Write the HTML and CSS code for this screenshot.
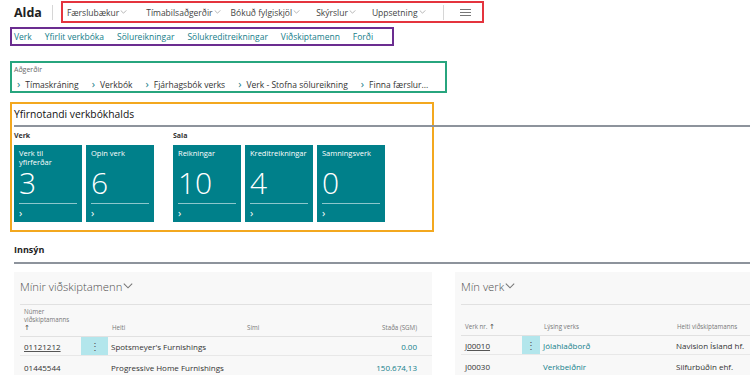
FILE: index.html
```html
<!DOCTYPE html>
<html lang="is">
<head>
    <meta charset="UTF-8">
    <meta name="viewport" content="width=device-width, initial-scale=1.0">
    <title>Alda - Yfirnotandi verkbókhalds</title>
    <link rel="stylesheet" href="styles.css">
</head>
<body>
    <header class="topbar">
        <span class="company">Alda</span>
        <span class="vsep"></span>
        <nav class="menu mark-red">
            <span class="menu-item">Færslubækur<svg class="chev" viewBox="0 0 8 5"><path d="M0.5 0.5 L4 4 L7.5 0.5"/></svg></span>
            <span class="menu-item">Tímabilsaðgerðir<svg class="chev" viewBox="0 0 8 5"><path d="M0.5 0.5 L4 4 L7.5 0.5"/></svg></span>
            <span class="menu-item">Bókuð fylgiskjöl<svg class="chev" viewBox="0 0 8 5"><path d="M0.5 0.5 L4 4 L7.5 0.5"/></svg></span>
            <span class="menu-item">Skýrslur<svg class="chev" viewBox="0 0 8 5"><path d="M0.5 0.5 L4 4 L7.5 0.5"/></svg></span>
            <span class="menu-item">Uppsetning<svg class="chev" viewBox="0 0 8 5"><path d="M0.5 0.5 L4 4 L7.5 0.5"/></svg></span>
            <span class="vsep"></span>
            <svg class="hamburger" viewBox="0 0 11 7"><path d="M0 0.5 H11 M0 3.5 H11 M0 6.5 H11"/></svg>
        </nav>
    </header>

    <nav class="links mark-purple">
        <a>Verk</a>
        <a>Yfirlit verkbóka</a>
        <a>Sölureikningar</a>
        <a>Sölukreditreikningar</a>
        <a>Viðskiptamenn</a>
        <a>Forði</a>
    </nav>

    <section class="actions mark-green">
        <div class="caption">Aðgerðir</div>
        <div class="action-list">
            <a><span class="arrow">›</span>Tímaskráning</a>
            <a><span class="arrow">›</span>Verkbók</a>
            <a><span class="arrow">›</span>Fjárhagsbók verks</a>
            <a><span class="arrow">›</span>Verk - Stofna sölureikning</a>
            <a><span class="arrow">›</span>Finna færslur...</a>
        </div>
    </section>

    <section class="headline mark-orange">
        <h2 class="section-title">Yfirnotandi verkbókhalds</h2>
        <div class="rule wide"></div>
        <div class="groups">
            <div class="group">
                <div class="group-label">Verk</div>
                <div class="tiles">
                    <div class="tile">
                        <div class="tile-title">Verk til yfirferðar</div>
                        <div class="tile-value">3</div>
                        <div class="tile-foot">›</div>
                    </div>
                    <div class="tile">
                        <div class="tile-title">Opin verk</div>
                        <div class="tile-value">6</div>
                        <div class="tile-foot">›</div>
                    </div>
                </div>
            </div>
            <div class="group">
                <div class="group-label">Sala</div>
                <div class="tiles">
                    <div class="tile">
                        <div class="tile-title">Reikningar</div>
                        <div class="tile-value">10</div>
                        <div class="tile-foot">›</div>
                    </div>
                    <div class="tile">
                        <div class="tile-title">Kreditreikningar</div>
                        <div class="tile-value">4</div>
                        <div class="tile-foot">›</div>
                    </div>
                    <div class="tile">
                        <div class="tile-title">Samningsverk</div>
                        <div class="tile-value">0</div>
                        <div class="tile-foot">›</div>
                    </div>
                </div>
            </div>
        </div>
    </section>

    <section class="insight">
        <h3 class="insight-title">Innsýn</h3>
        <div class="rule"></div>
        <div class="cards">
            <div class="card">
                <div class="card-title">Mínir viðskiptamenn<svg class="chev big" viewBox="0 0 8 5"><path d="M0.5 0.5 L4 4 L7.5 0.5"/></svg></div>
                <table class="list customers">
                    <thead>
                        <tr>
                            <th class="c-no">Númer<br>viðskiptamanns<br><span class="sort">↑</span></th>
                            <th class="c-dots"></th>
                            <th class="c-name">Heiti</th>
                            <th class="c-phone">Sími</th>
                            <th class="c-amount">Staða (SGM)</th>
                        </tr>
                    </thead>
                    <tbody>
                        <tr class="selected">
                            <td class="c-no"><u>01121212</u></td>
                            <td class="c-dots"><span class="dots">⋮</span></td>
                            <td class="c-name">Spotsmeyer's Furnishings</td>
                            <td class="c-phone"></td>
                            <td class="c-amount link">0.00</td>
                        </tr>
                        <tr>
                            <td class="c-no">01445544</td>
                            <td class="c-dots"></td>
                            <td class="c-name">Progressive Home Furnishings</td>
                            <td class="c-phone"></td>
                            <td class="c-amount link">150.674,13</td>
                        </tr>
                    </tbody>
                </table>
            </div>
            <div class="card">
                <div class="card-title">Mín verk<svg class="chev big" viewBox="0 0 8 5"><path d="M0.5 0.5 L4 4 L7.5 0.5"/></svg></div>
                <table class="list jobs">
                    <thead>
                        <tr>
                            <th class="j-no">Verk nr. <span class="sort">↑</span></th>
                            <th class="j-dots"></th>
                            <th class="j-desc">Lýsing verks</th>
                            <th class="j-cust">Heiti viðskiptamanns</th>
                        </tr>
                    </thead>
                    <tbody>
                        <tr class="selected">
                            <td class="j-no"><u>J00010</u></td>
                            <td class="j-dots"><span class="dots">⋮</span></td>
                            <td class="j-desc link">Jólahlaðborð</td>
                            <td class="j-cust">Navision Ísland hf.</td>
                        </tr>
                        <tr>
                            <td class="j-no">J00030</td>
                            <td class="j-dots"></td>
                            <td class="j-desc link">Verkbeiðnir</td>
                            <td class="j-cust">Silfurbúðin ehf.</td>
                        </tr>
                    </tbody>
                </table>
            </div>
        </div>
    </section>
</body>
</html>
```

FILE: styles.css
```css
body {
    margin: 0;
    font-family: 'Open Sans', 'Noto Sans', sans-serif;
    font-size: 8.5px;
    color: #333;
    background-color: #fff;
    overflow: hidden;
    width: 750px;
    height: 375px;
}

a {
    cursor: pointer;
}

/* annotation frames */
.mark-red { border: 2px solid #e4343e; }
.mark-purple { border: 2px solid #6b2d90; }
.mark-green { border: 2px solid #27a57e; }
.mark-orange { border: 2px solid #f3a81f; }

.vsep {
    display: inline-block;
    width: 1px;
    height: 15px;
    background-color: #d6d6d6;
}

.chev {
    width: 7px;
    height: 4px;
    margin-left: 1px;
    fill: none;
    stroke: #9a9a9a;
    stroke-width: 0.9;
}

.chev.big {
    width: 10px;
    height: 6px;
    margin-left: 1px;
    stroke: #777;
}

/* top bar */
.topbar {
    display: flex;
    align-items: center;
    height: 24px;
    padding-left: 14px;
}

.company {
    font-size: 12.5px;
    font-weight: 700;
    color: #222;
    margin-right: 10px;
}

.topbar > .vsep {
    margin-right: 8px;
}

.menu {
    display: flex;
    align-items: center;
    height: 18px;
    padding: 0 11px 0 4px;
    color: #444;
}

.menu-item {
    display: flex;
    align-items: center;
    margin-right: 16px;
    white-space: nowrap;
}

.menu-item:first-child {
    margin-right: 19px;
}

.menu-item:nth-child(2) {
    margin-right: 10px;
}

.menu .vsep {
    margin-left: 1px;
    margin-right: 16px;
}

.hamburger {
    width: 11px;
    height: 7px;
    fill: none;
    stroke: #777;
    stroke-width: 1;
}

/* secondary links */
.links {
    display: flex;
    gap: 13px;
    width: 378px;
    height: 15px;
    align-items: center;
    margin: 3px 0 0 10px;
    padding: 0 0 0 2px;
    color: #157d89;
    white-space: nowrap;
}

/* actions */
.actions {
    width: 431px;
    height: 28px;
    margin: 15px 0 0 10px;
    padding: 0 0 0 2px;
}

.caption {
    font-size: 7px;
    color: #666;
    line-height: 9px;
    margin-top: 2px;
}

.action-list {
    display: flex;
    gap: 13px;
    margin-top: 5px;
    padding-left: 3px;
    white-space: nowrap;
    color: #333;
}

.arrow {
    color: #157d89;
    font-size: 11px;
    line-height: 9px;
    margin-right: 5px;
}

/* role center headline */
.headline {
    width: 418px;
    height: 126px;
    margin: 9px 0 0 10px;
    padding: 0 0 0 2px;
}

.section-title {
    margin: 3px 0 0 0;
    font-size: 10.3px;
    font-weight: 400;
    color: #111;
    line-height: 15px;
}

.rule {
    height: 2px;
    background-color: #8d939c;
}

.rule.wide {
    width: 736px;
    margin-top: 3px;
}

.groups {
    display: flex;
    gap: 19px;
    margin-top: 4px;
}

.group-label {
    font-size: 7px;
    font-weight: 700;
    color: #333;
    line-height: 10px;
    margin-bottom: 4px;
}

.tiles {
    display: flex;
    gap: 4px;
}

.tile {
    width: 68px;
    height: 77px;
    background-color: #00808a;
    color: #fff;
    display: flex;
    flex-direction: column;
    padding: 0 5px;
    box-sizing: border-box;
}

.tile-title {
    font-size: 7.5px;
    line-height: 9px;
    height: 20px;
    margin-top: 4px;
}

.tile-value {
    font-size: 30px;
    font-weight: 300;
    line-height: 28px;
    height: 34px;
}

.tile-foot {
    border-top: 1px solid #8cc7cc;
    font-size: 11px;
    line-height: 14px;
    padding-top: 2px;
}

/* insight */
.insight {
    padding-left: 14px;
    margin-top: 12px;
}

.insight-title {
    margin: 0;
    font-size: 9px;
    font-weight: 700;
    color: #222;
    line-height: 12px;
}

.insight .rule {
    margin-top: 6px;
}

.cards {
    display: grid;
    grid-template-columns: 418px 418px;
    gap: 23px;
    margin-top: 8px;
}

.card {
    background-color: #f8f8f8;
    padding-left: 6px;
    height: 110px;
}

.card-title {
    display: flex;
    align-items: center;
    font-size: 11.3px;
    font-weight: 300;
    color: #505050;
    height: 28px;
    padding-bottom: 4px;
}

.list {
    width: 100%;
    border-collapse: collapse;
    border-top: 1px solid #e1e1e1;
    white-space: nowrap;
}

.list th {
    font-size: 6.2px;
    font-weight: 400;
    color: #777;
    text-align: left;
    vertical-align: bottom;
    line-height: 8px;
    padding: 3px 3px 4px 4px;
    height: 23px;
    border-bottom: 1px solid #e1e1e1;
}

.sort {
    font-family: 'DejaVu Sans', sans-serif;
    font-size: 7px;
    color: #444;
}

.list td {
    font-size: 8px;
    color: #333;
    padding: 0 3px;
    height: 18px;
}

.list tbody tr + tr td {
    border-top: 1px solid #e8e8e8;
    height: 22px;
}

.list .link {
    color: #127f8b;
}

.list td u {
    text-decoration-color: #555;
}

.list td.c-no, .list td.j-no, .list th.c-no, .list th.j-no {
    padding-left: 4px;
}

.c-no { width: 54px; }
.c-dots, .j-dots { padding: 0 !important; }
.c-dots { width: 27px; }
.c-name { width: 128px; }
.c-phone { width: 120px; }
.list .c-amount { text-align: right; padding-right: 15px; }

.j-no { width: 54px; }
.j-dots { width: 18px; }
.j-desc { width: 126px; }

.dots {
    display: flex;
    align-items: center;
    justify-content: center;
    height: 18px;
    background-color: #b3e6ec;
    color: #555;
    font-size: 10px;
}
```
